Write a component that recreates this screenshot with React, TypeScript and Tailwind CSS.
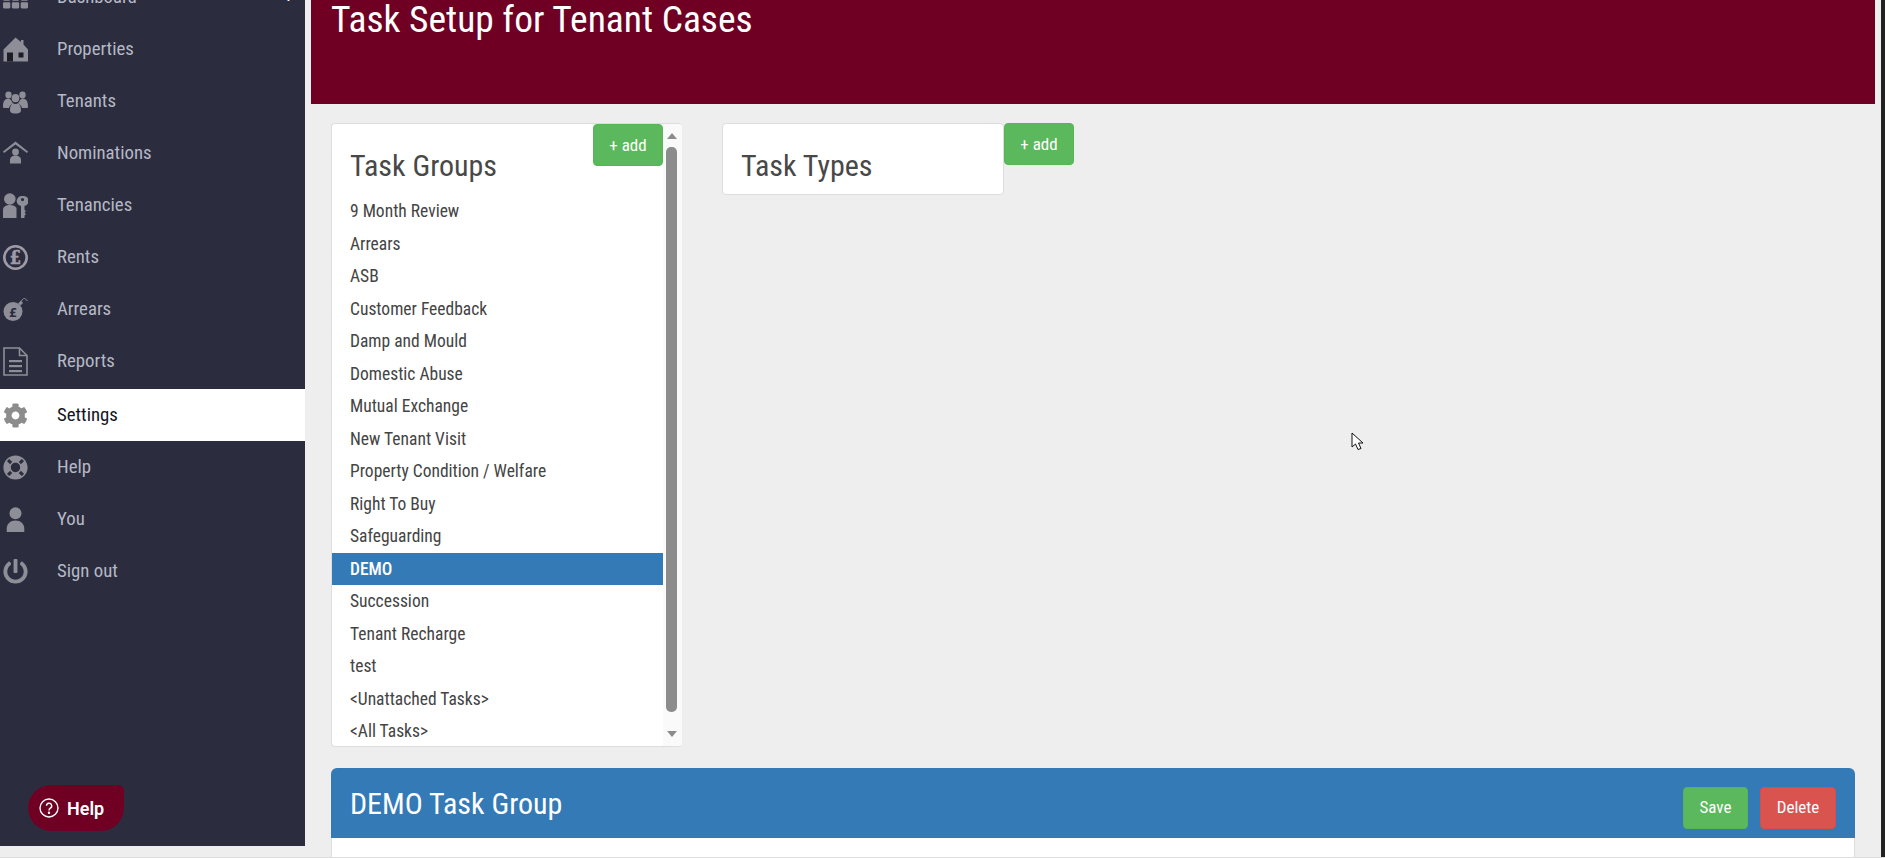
import { FaCog, FaLifeRing, FaPowerOff, FaTh } from "react-icons/fa";
import type { ReactNode } from "react";

const GROUPS = [
  "9 Month Review",
  "Arrears",
  "ASB",
  "Customer Feedback",
  "Damp and Mould",
  "Domestic Abuse",
  "Mutual Exchange",
  "New Tenant Visit",
  "Property Condition / Welfare",
  "Right To Buy",
  "Safeguarding",
  "DEMO",
  "Succession",
  "Tenant Recharge",
  "test",
  "<Unattached Tasks>",
  "<All Tasks>",
];

function HomeIcon() {
  return (
    <svg viewBox="0 0 25 25" className="h-[25px] w-[25px]" fill="currentColor">
      <path d="M12.5 0.5 L18 5 V3 H20.5 V7.5 L25 12.5 V24.5 H0.5 V12.5 Z" />
      <rect x="4" y="15.5" width="6" height="9" fill="#1d1d28" />
      <rect x="15.5" y="15.5" width="5" height="5" fill="#1d1d28" />
    </svg>
  );
}

function UsersIcon() {
  return (
    <svg viewBox="0 1.5 25 23" className="h-[25px] w-[25px]" fill="currentColor" preserveAspectRatio="none">
      <circle cx="5.5" cy="7" r="3.2" />
      <circle cx="19.5" cy="7" r="3.2" />
      <circle cx="12.5" cy="10" r="3.8" />
      <path d="M0 17.5 C0 12.5 2 10.5 5 10.5 C6.5 10.5 7.5 11 8.3 12 C8.8 13.5 9.5 14 10 14.5 C8 15.5 6.5 17 6 19 H1.5 C0.5 19 0 18.5 0 17.5 Z" />
      <path d="M25 17.5 C25 12.5 23 10.5 20 10.5 C18.5 10.5 17.5 11 16.7 12 C16.2 13.5 15.5 14 15 14.5 C17 15.5 18.5 17 19 19 H23.5 C24.5 19 25 18.5 25 17.5 Z" />
      <path d="M7 21 C7 16.5 9 14.5 10.5 14.5 C11 15 11.7 15.3 12.5 15.3 C13.3 15.3 14 15 14.5 14.5 C16 14.5 18 16.5 18 21 C18 22.5 17 24 12.5 24 C8 24 7 22.5 7 21 Z" />
    </svg>
  );
}

function NominationIcon() {
  return (
    <svg viewBox="0 0 25 25" className="h-[25px] w-[25px]" fill="currentColor">
      <path d="M12.5 0.5 L25 10.5 L24 12 L12.5 3.5 L1 12 L0 10.5 Z" />
      <circle cx="12.5" cy="11" r="3.4" />
      <path d="M7 22.5 V19 C7 16 9.5 14.5 12.5 14.5 C15.5 14.5 18 16 18 19 V22.5 Z" />
    </svg>
  );
}

function TenancyIcon() {
  return (
    <svg viewBox="0 0 25 25" className="h-[25px] w-[25px]" fill="currentColor">
      <circle cx="6.8" cy="6" r="5.8" />
      <path d="M0 25 V17 C0 13.5 3 12 7 12 C10 12 12.5 13 13.5 15 V25 Z" />
      <path
        fillRule="evenodd"
        d="M19.5 3 A5 5 0 0 1 21.5 13 V17 L23 18 L21.5 19.5 L23 21 L21.5 22.5 V25 H18 V13 A5 5 0 0 1 19.5 3 Z M19.5 5 A1.6 1.6 0 1 0 19.5 8.2 A1.6 1.6 0 1 0 19.5 5 Z"
      />
    </svg>
  );
}

function RentIcon() {
  return (
    <svg viewBox="0 0 25 25" className="h-[25px] w-[25px] text-[#a09aa8]">
      <circle cx="12.5" cy="12.5" r="11.2" fill="none" stroke="currentColor" strokeWidth="2.6" />
      <text x="12.5" y="19" textAnchor="middle" fontSize="18" fontWeight="700" fontFamily="'DejaVu Serif', serif" fill="currentColor" stroke="currentColor" strokeWidth="0.5">
        £
      </text>
    </svg>
  );
}

function BombIcon() {
  return (
    <svg viewBox="0 0 25 25" className="h-[25px] w-[25px]">
      <circle cx="10" cy="14.5" r="9.5" fill="currentColor" />
      <path d="M15 6.5 L18 3.5 L20 6 L17.5 8.5 Z" fill="currentColor" />
      <path d="M18.5 4 C20 1 22 0.5 24.5 4" fill="none" stroke="currentColor" strokeWidth="1" />
      <text x="10" y="19.5" textAnchor="middle" fontSize="13" fontWeight="700" fontFamily="'DejaVu Sans', sans-serif" fill="#2b2d3e">
        £
      </text>
    </svg>
  );
}

function ReportIcon() {
  return (
    <svg viewBox="0 0 25 29" className="h-[29px] w-[25px]" fill="none" stroke="currentColor" strokeWidth="1.6">
      <path d="M1 1 H16.5 L24 8.5 V28 H1 Z" />
      <path d="M16.5 1 V8.5 H24" />
      <rect x="6" y="13" width="13" height="2.2" fill="currentColor" stroke="none" />
      <rect x="6" y="18" width="13" height="2.2" fill="currentColor" stroke="none" />
      <rect x="6" y="23" width="13" height="2.2" fill="currentColor" stroke="none" />
    </svg>
  );
}

function UserIcon() {
  return (
    <svg viewBox="0 0 25 25" className="h-[25px] w-[25px]" fill="currentColor">
      <circle cx="12.5" cy="6.2" r="6" />
      <path d="M3.7 25 V22 C3.7 16.5 7.5 13.5 12.5 13.5 C17.5 13.5 21.3 16.5 21.3 22 V25 Z" />
    </svg>
  );
}

const NAV: { label: string; icon: ReactNode; active?: boolean }[] = [
  { label: "Properties", icon: <HomeIcon /> },
  { label: "Tenants", icon: <UsersIcon /> },
  { label: "Nominations", icon: <NominationIcon /> },
  { label: "Tenancies", icon: <TenancyIcon /> },
  { label: "Rents", icon: <RentIcon /> },
  { label: "Arrears", icon: <BombIcon /> },
  { label: "Reports", icon: <ReportIcon /> },
  { label: "Settings", icon: <FaCog size={25} />, active: true },
  { label: "Help", icon: <FaLifeRing size={25} /> },
  { label: "You", icon: <UserIcon /> },
  { label: "Sign out", icon: <FaPowerOff size={25} /> },
];

function Sidebar() {
  return (
    <aside className="relative h-[846px] w-[305px] shrink-0 overflow-hidden bg-[#2b2d3e] text-[18.8px]">
      <div className="-mt-[29px]">
        <div className="flex h-[52px] items-center text-[#b5b8c5]">
          <span className="flex w-[57px] pl-[3px] text-[#8e8e98]">
            <FaTh size={25} />
          </span>
          <span>Dashboard</span>
          <span className="mr-[12px] ml-auto text-white">+</span>
        </div>
        {NAV.map((n) => (
          <div
            key={n.label}
            className={`flex h-[52px] items-center ${n.active ? "mt-[2px] bg-white text-[#14141e]" : "text-[#b5b8c5]"}`}
          >
            <span className={`flex w-[57px] pl-[3px] ${n.active ? "text-[#8c8c8c]" : "text-[#8e8e98]"}`}>
              {n.icon}
            </span>
            <span>{n.label}</span>
          </div>
        ))}
      </div>
      <button className="absolute top-[785px] left-[28px] flex h-[46px] w-[96px] items-center gap-[8px] rounded-tl-[24px] rounded-tr-[6px] rounded-br-[24px] rounded-bl-[24px] bg-[#6f0024] pl-[11px] text-[18px] font-semibold text-white [font-stretch:100%]">
        <svg viewBox="0 0 20 20" className="h-[20px] w-[20px]" fill="none" stroke="white" strokeWidth="1.4">
          <circle cx="10" cy="10" r="9" />
          <path d="M7.5 7.8 A2.6 2.6 0 1 1 11.3 10.2 C10.3 10.8 10 11.2 10 12.4" />
          <circle cx="10" cy="14.8" r="0.5" fill="white" />
        </svg>
        Help
      </button>
    </aside>
  );
}

function AddButton() {
  return (
    <button className="flex h-[42px] w-[70px] items-center justify-center rounded-[4px] border border-[#57b557] bg-[#5cb85c] pt-[1px] text-[17px] text-white">
      + add
    </button>
  );
}

function TaskGroups() {
  return (
    <div className="relative h-[624px] w-[351px] shrink-0 overflow-hidden rounded-[4px] border border-r-0 border-[#ddd] bg-white">
      <div className="pt-[17px]">
        <h2 className="pl-[18px] text-[30px] leading-[50px] text-[#484848]">Task Groups</h2>
        <ul className="mt-[4px] w-[332px]">
          {GROUPS.map((g) => (
            <li
              key={g}
              className={`flex h-[32.5px] items-center pl-[18px] text-[17.5px] ${g === "DEMO" ? "bg-[#337ab7] font-medium text-white" : "text-[#444]"}`}
            >
              {g}
            </li>
          ))}
        </ul>
      </div>
      <div className="absolute top-0 right-[19px]">
        <AddButton />
      </div>
      <div className="absolute top-0 right-0 flex h-full w-[19px] flex-col items-start bg-[#fafafa] pl-[3px]">
        <div className="mt-[9px] ml-[1px] h-0 w-0 border-x-[5px] border-b-[6px] border-x-transparent border-b-[#8c8c8c]" />
        <div className="mt-[8px] h-[565px] w-[11px] rounded-[5px] bg-[#8c8c8c]" />
        <div className="mt-[19px] ml-[1px] h-0 w-0 border-x-[5px] border-t-[6px] border-x-transparent border-t-[#8c8c8c]" />
      </div>
    </div>
  );
}

export default function App() {
  return (
    <div className="relative flex h-[858px] w-full overflow-hidden border-b border-[#ddd] bg-[#eeeeee] font-['Roboto',sans-serif] text-[17px] [font-stretch:75%]">
      <Sidebar />
      <main className="ml-[6px] w-[1564px] shrink-0">
        <header className="h-[104px] bg-[#6f0024] pl-[20px]">
          <h1 className="text-[37.5px] leading-[38px] text-white">Task Setup for Tenant Cases</h1>
        </header>
        <div className="mt-[19px] flex items-start pl-[20px]">
          <TaskGroups />
          <div className="ml-[40px] flex items-start">
            <div className="h-[72px] w-[282px] rounded-[4px] border border-[#ddd] bg-white pt-[17px] pl-[18px]">
              <h2 className="text-[30px] leading-[50px] text-[#484848]">Task Types</h2>
            </div>
            <AddButton />
          </div>
        </div>
        <section className="mt-[21px] ml-[20px] h-[120px] w-[1524px] rounded-t-[6px] border border-b-0 border-[#ddd] bg-white">
          <div className="-m-px flex h-[70px] items-center justify-between rounded-t-[6px] bg-[#337ab7] pr-[19px] pl-[19px]">
            <h2 className="text-[30px] text-white">DEMO Task Group</h2>
            <div className="mt-[10px] flex gap-[12px]">
              <button className="h-[42px] w-[65px] rounded-[4px] border border-[#57b557] bg-[#5cb85c] text-white">Save</button>
              <button className="h-[42px] w-[76px] rounded-[4px] border border-[#d4504c] bg-[#d9534f] text-white">Delete</button>
            </div>
          </div>
        </section>
      </main>
      <div className="absolute top-0 right-0 h-full w-[4px] bg-[#222]" />
      <svg viewBox="0 0 13 19" className="absolute top-[432px] left-[1351px] h-[19px] w-[13px]">
        <path d="M1 1 V15 L4.5 12 L7 17.5 L10 16.5 L7.5 11 H12 Z" fill="white" stroke="#111" strokeWidth="1" />
      </svg>
    </div>
  );
}
